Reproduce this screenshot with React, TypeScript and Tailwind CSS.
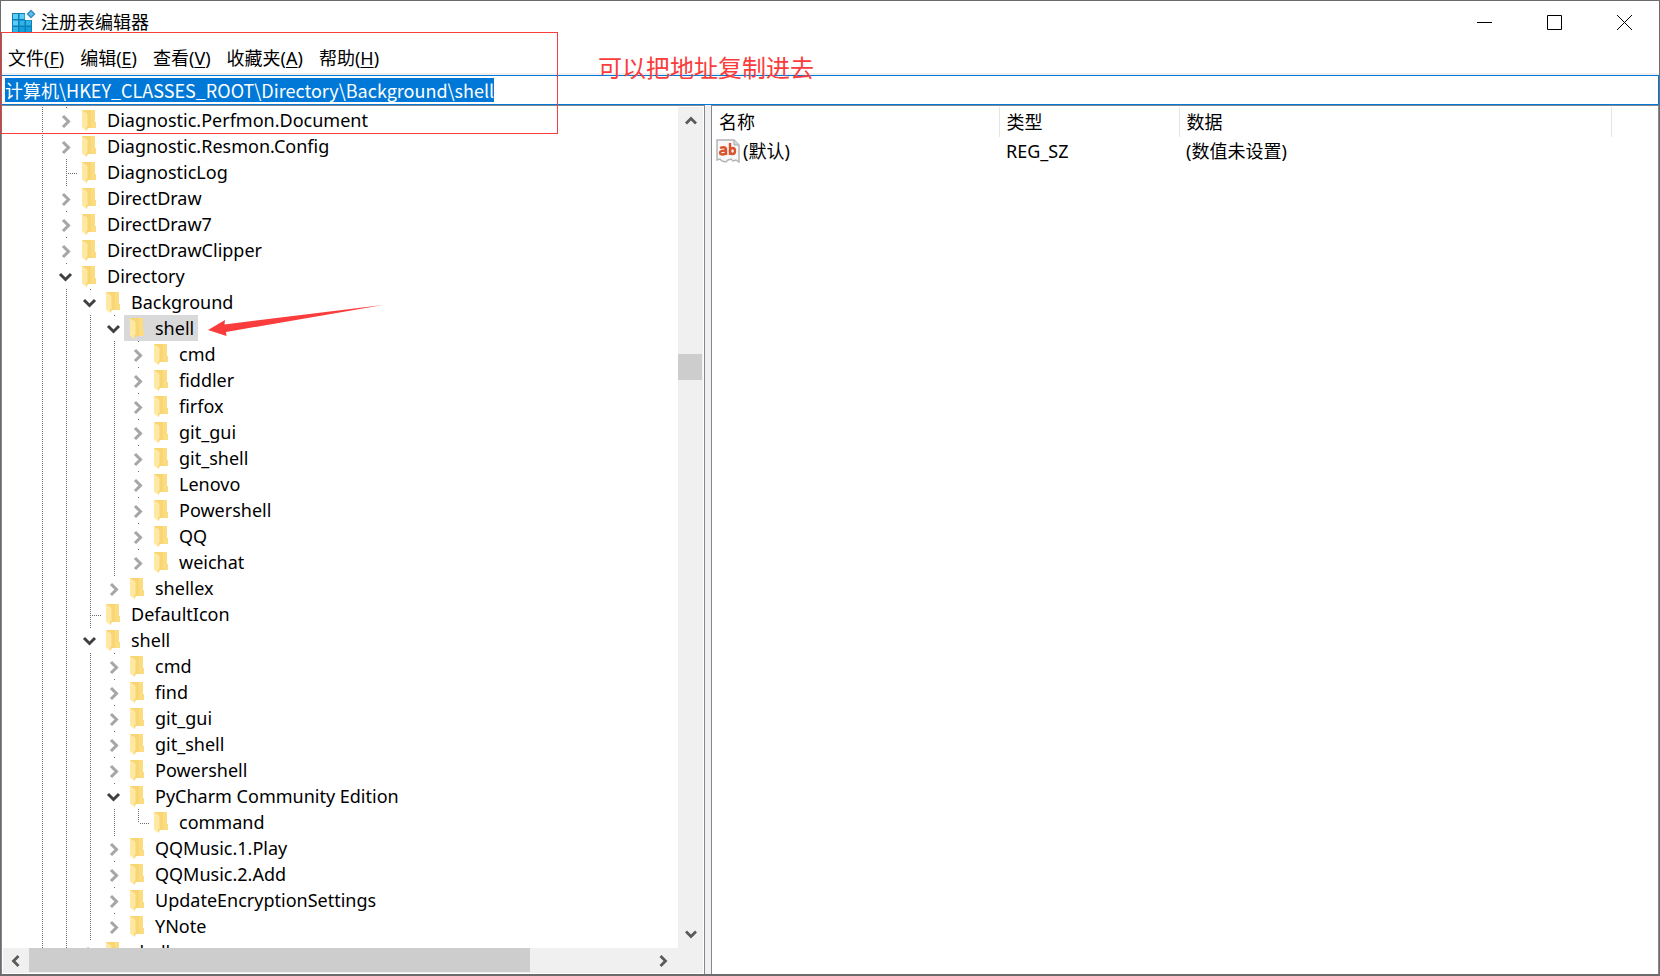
import { useEffect, useRef } from 'react';

type NodeState = 'open' | 'closed' | 'leaf';

type TreeNode = {
  name: string;
  level: number;
  state: NodeState;
  selected?: boolean;
};

const nodes: TreeNode[] = [
  { name: 'Diagnostic.Perfmon.Document', level: 1, state: 'closed' },
  { name: 'Diagnostic.Resmon.Config', level: 1, state: 'closed' },
  { name: 'DiagnosticLog', level: 1, state: 'leaf' },
  { name: 'DirectDraw', level: 1, state: 'closed' },
  { name: 'DirectDraw7', level: 1, state: 'closed' },
  { name: 'DirectDrawClipper', level: 1, state: 'closed' },
  { name: 'Directory', level: 1, state: 'open' },
  { name: 'Background', level: 2, state: 'open' },
  { name: 'shell', level: 3, state: 'open', selected: true },
  { name: 'cmd', level: 4, state: 'closed' },
  { name: 'fiddler', level: 4, state: 'closed' },
  { name: 'firfox', level: 4, state: 'closed' },
  { name: 'git_gui', level: 4, state: 'closed' },
  { name: 'git_shell', level: 4, state: 'closed' },
  { name: 'Lenovo', level: 4, state: 'closed' },
  { name: 'Powershell', level: 4, state: 'closed' },
  { name: 'QQ', level: 4, state: 'closed' },
  { name: 'weichat', level: 4, state: 'closed' },
  { name: 'shellex', level: 3, state: 'closed' },
  { name: 'DefaultIcon', level: 2, state: 'leaf' },
  { name: 'shell', level: 2, state: 'open' },
  { name: 'cmd', level: 3, state: 'closed' },
  { name: 'find', level: 3, state: 'closed' },
  { name: 'git_gui', level: 3, state: 'closed' },
  { name: 'git_shell', level: 3, state: 'closed' },
  { name: 'Powershell', level: 3, state: 'closed' },
  { name: 'PyCharm Community Edition', level: 3, state: 'open' },
  { name: 'command', level: 4, state: 'leaf' },
  { name: 'QQMusic.1.Play', level: 3, state: 'closed' },
  { name: 'QQMusic.2.Add', level: 3, state: 'closed' },
  { name: 'UpdateEncryptionSettings', level: 3, state: 'closed' },
  { name: 'YNote', level: 3, state: 'closed' },
  { name: 'shellex', level: 2, state: 'closed' },
];

const menus = [
  { label: '文件', hotkey: 'F' },
  { label: '编辑', hotkey: 'E' },
  { label: '查看', hotkey: 'V' },
  { label: '收藏夹', hotkey: 'A' },
  { label: '帮助', hotkey: 'H' },
];

// true when another node of the same level follows under the same parent
const hasNextSibling = (index: number, level: number) => {
  for (let i = index + 1; i < nodes.length; i++) {
    if (nodes[i].level < level) return false;
    if (nodes[i].level === level) return true;
  }
  return level <= 1;
};

const AppIcon = () => (
  <svg width="24" height="26" viewBox="0 0 24 26" aria-hidden="true">
    <path d="M0 4h13v7h7v13H0z" fill="#0a7fb8" />
    <path d="M1 5h5v5H1zM7.500 5h5v5h-5zM1 11.500h5v5H1z" fill="#5ccdf5" />
    <path d="M7.500 11.500h5v5h-5zM1 18h5v5H1zM14 11.500h5v5h-5z" fill="#2fb4e8" />
    <path d="M7.500 18h5v5h-5zM14 18h5v5h-5z" fill="#12a0dc" />
    <path d="M19 0.500l4.500 4.500L19 9.500 14.500 5z" fill="#2f8fc0" />
    <path d="M19 2.500l2.500 2.500L19 7.500 16.500 5z" fill="#63bfe6" />
  </svg>
);

const FolderIcon = () => (
  <svg width="14" height="26" viewBox="0 0 14 26" className="shrink-0" aria-hidden="true">
    <path d="M0 3h13v12h1v6H4z" fill="#f7d673" />
    <path d="M9 3h4v12h1v6H9z" fill="#fbdc80" />
    <path d="M0 3.500l4.500 2.500q1 .5 1 2v13.500l-1 2.500L0 20.500z" fill="#ffe8a2" />
    <path d="M4.500 20.500v3.500l1-2.500v-2z" fill="#f3cd62" />
  </svg>
);

const StringValueIcon = () => (
  <svg width="24" height="24" viewBox="0 0 24 24" className="shrink-0" aria-hidden="true">
    <path
      d="M1 1h17l5 5v17l-3-2-3 1-2-2-3 1-2 2-4-1-2-2-3 1z"
      fill="#f8f8f8"
      stroke="#b4b4b4"
      strokeWidth="1.500"
    />
    <path d="M18 1v5h5" fill="#d9d9d9" stroke="#a9a9a9" />
    <g fill="none" stroke="#d9532c" strokeWidth="2.400">
      <path d="M4 9q5-2 6 1v6" />
      <path d="M10 11.500q-6 0-6 2.200 0 3 6 .8" />
      <path d="M14 4v12" />
      <ellipse cx="16.500" cy="12" rx="2.500" ry="3" />
    </g>
  </svg>
);

const Expander = ({ open }: { open: boolean }) => (
  <svg width="24" height="26" viewBox="0 0 24 26" fill="none" strokeWidth="3" aria-hidden="true">
    {open ? (
      <path d="M6 11l5.500 5.500L17 11" stroke="#404040" />
    ) : (
      <path d="M9 9l5.500 5.500L9 20" stroke="#a6a6a6" />
    )}
  </svg>
);

const ScrollArrow = ({ direction }: { direction: 'up' | 'down' | 'left' | 'right' }) => {
  const paths = {
    up: 'M3 10.500l5-5 5 5',
    down: 'M3 5.500l5 5 5-5',
    left: 'M10.500 3l-5 5 5 5',
    right: 'M5.500 3l5 5-5 5',
  };
  return (
    <svg width="16" height="16" viewBox="0 0 16 16" fill="none" stroke="#5a5a5a" strokeWidth="2.800" aria-hidden="true">
      <path d={paths[direction]} />
    </svg>
  );
};

const Guide = () => (
  <span className="flex h-[26px] w-6 shrink-0 pl-3">
    <span className="h-full w-px bg-[repeating-linear-gradient(to_bottom,#6d6d6d_0px,#6d6d6d_1px,transparent_1px,transparent_2px)]" />
  </span>
);

const LeafGuide = ({ last }: { last: boolean }) => (
  <span className="flex h-[26px] w-6 shrink-0 pl-3">
    <span
      className={`w-px bg-[repeating-linear-gradient(to_bottom,#6d6d6d_0px,#6d6d6d_1px,transparent_1px,transparent_2px)] ${last ? 'h-[14px]' : 'h-full'}`}
    />
    <span className="mt-[14px] h-px flex-1 bg-[repeating-linear-gradient(to_right,transparent_0px,transparent_1px,#6d6d6d_1px,#6d6d6d_2px)]" />
  </span>
);

const TreeRow = ({ node, index }: { node: TreeNode; index: number }) => {
  const ancestors = Array.from({ length: node.level }, (_, level) => level);

  return (
    <li className="flex h-[26px] shrink-0 items-start pl-7">
      {ancestors.map(level =>
        level === 0 || hasNextSibling(index, level) ? (
          <Guide key={level} />
        ) : (
          <span key={level} className="w-6 shrink-0" />
        )
      )}
      {node.state === 'leaf' ? (
        <LeafGuide last={!hasNextSibling(index, node.level)} />
      ) : (
        <button
          aria-label={`${node.state === 'open' ? '折叠' : '展开'} ${node.name}`}
          className="h-[26px] w-6 shrink-0 bg-[linear-gradient(#6d6d6d,#6d6d6d)] bg-[length:1px_1px] bg-[position:12px_0px] bg-no-repeat"
        >
          <Expander open={node.state === 'open'} />
        </button>
      )}
      <span className={`-ml-0.5 flex h-[26px] items-center gap-[11px] pr-1 pl-1.5 ${node.selected ? 'bg-[#d9d9d9]' : ''}`}>
        <FolderIcon />
        <span className="leading-[26px] whitespace-nowrap">{node.name}</span>
      </span>
    </li>
  );
};

const TitleBar = () => (
  <header className="flex h-[42px] shrink-0 items-center justify-between">
    <div className="flex items-center gap-[5px] pl-[11px]">
      <AppIcon />
      <h1 className="leading-6">注册表编辑器</h1>
    </div>
    <div className="flex h-full">
      <button aria-label="最小化" className="flex w-[70px] items-center justify-center">
        <svg width="15" height="15" viewBox="0 0 15 15" aria-hidden="true">
          <path d="M0 7.500h15" stroke="#000" />
        </svg>
      </button>
      <button aria-label="最大化" className="flex w-[70px] items-center justify-center">
        <svg width="15" height="15" viewBox="0 0 15 15" aria-hidden="true">
          <path d="M.5 .5h14v14H.5z" fill="none" stroke="#000" />
        </svg>
      </button>
      <button aria-label="关闭" className="flex w-[70px] items-center justify-center">
        <svg width="15" height="15" viewBox="0 0 15 15" aria-hidden="true">
          <path d="M0 0l15 15M15 0L0 15" stroke="#000" />
        </svg>
      </button>
    </div>
  </header>
);

const MenuBar = () => (
  <nav className="flex h-[30px] shrink-0 items-center">
    {menus.map(menu => (
      <button key={menu.hotkey} className="pr-[9px] pl-[7px] leading-[30px] whitespace-nowrap">
        {menu.label}(<span className="underline underline-offset-2">{menu.hotkey}</span>)
      </button>
    ))}
  </nav>
);

const AddressBar = () => {
  const inputRef = useRef<HTMLInputElement>(null);

  useEffect(() => {
    inputRef.current?.focus();
    inputRef.current?.select();
  }, []);

  return (
    <div className="flex h-[30px] shrink-0 items-center border border-[#0078d7] px-[3px]">
      <input
        ref={inputRef}
        aria-label="地址"
        spellCheck={false}
        defaultValue={'计算机\\HKEY_CLASSES_ROOT\\Directory\\Background\\shell'}
        className="h-6 w-full font-['Noto_Sans_CJK_SC',sans-serif] leading-6 outline-none selection:bg-[#0078d7] selection:text-white"
      />
    </div>
  );
};

const TreePane = () => (
  <section className="flex w-[703px] shrink flex-col border-t border-r border-[#828790] pt-px pr-px">
    <div className="flex min-h-0 flex-1">
      <ul className="flex min-w-0 flex-1 flex-col overflow-hidden">
        {nodes.map((node, i) => (
          <TreeRow key={i} node={node} index={i} />
        ))}
      </ul>
      <div className="flex w-[25px] shrink-0 flex-col bg-[#f0f0f0]">
        <button aria-label="向上滚动" className="flex h-7 items-center justify-center">
          <ScrollArrow direction="up" />
        </button>
        <div className="flex flex-1 flex-col">
          <div className="grow-[219]" />
          <div className="h-[26px] w-6 bg-[#cdcdcd]" />
          <div className="grow-[540]" />
        </div>
        <button aria-label="向下滚动" className="flex h-7 items-center justify-center">
          <ScrollArrow direction="down" />
        </button>
      </div>
    </div>
    <div className="mb-px ml-px flex h-[25px] shrink-0 bg-[#f0f0f0] pr-[25px]">
      <button aria-label="向左滚动" className="flex w-[26px] items-center justify-center">
        <ScrollArrow direction="left" />
      </button>
      <div className="flex-1">
        <div className="h-6 w-[81%] bg-[#cdcdcd]" />
      </div>
      <button aria-label="向右滚动" className="flex w-[30px] items-center justify-center">
        <ScrollArrow direction="right" />
      </button>
    </div>
  </section>
);

const ValuesPane = () => (
  <section className="min-w-0 flex-1 border-t border-r border-l border-[#828790] pt-px">
    <table className="table-fixed border-collapse text-left whitespace-nowrap">
      <colgroup>
        <col className="w-[287px]" />
        <col className="w-[180px]" />
        <col className="w-[432px]" />
      </colgroup>
      <thead>
        <tr className="h-[30px]">
          <th className="border-r border-[#e5e5e5] p-0 pl-[7px] leading-[30px] font-normal">名称</th>
          <th className="border-r border-[#e5e5e5] p-0 pl-[7px] leading-[30px] font-normal">类型</th>
          <th className="border-r border-[#e5e5e5] p-0 pl-[7px] leading-[30px] font-normal">数据</th>
        </tr>
      </thead>
      <tbody>
        <tr className="h-7">
          <td className="p-0 pl-1">
            <span className="flex items-center gap-[3px] leading-7">
              <StringValueIcon />
              (默认)
            </span>
          </td>
          <td className="p-0 pl-[7px] leading-7">REG_SZ</td>
          <td className="p-0 pl-[7px] leading-7">(数值未设置)</td>
        </tr>
      </tbody>
    </table>
  </section>
);

export default function App() {
  return (
    <div className="relative flex h-screen flex-col overflow-hidden border-x border-t border-b-2 border-[#6b6b6e] bg-white font-['Noto_Sans','Noto_Sans_CJK_SC',sans-serif] text-[18px] text-black">
      <TitleBar />
      <MenuBar />
      <div className="h-0.5 shrink-0 bg-[#f0f0f0]" />
      <AddressBar />
      <main className="flex min-h-0 flex-1 border-l border-[#828790]">
        <TreePane />
        <div className="w-[6px] shrink-0 bg-[#f0f0f0]" />
        <ValuesPane />
      </main>

      {/* hand-drawn notes on top of the window */}
      <div className="pointer-events-none absolute top-[31px] left-0 h-[102px] w-[557px] border border-[#fa3c3c]" />
      <p className="pointer-events-none absolute top-[49px] left-[597px] text-[24px] leading-9 whitespace-nowrap text-[#fa3c3c]">
        可以把地址复制进去
      </p>
      <svg
        width="176"
        height="34"
        viewBox="0 0 176 34"
        className="pointer-events-none absolute top-[303px] left-[207px]"
        aria-hidden="true"
      >
        <path d="M0 26L17 16l-.5 4.500L175 1 18 28l.5 4z" fill="#fa3c3c" />
      </svg>
    </div>
  );
}
